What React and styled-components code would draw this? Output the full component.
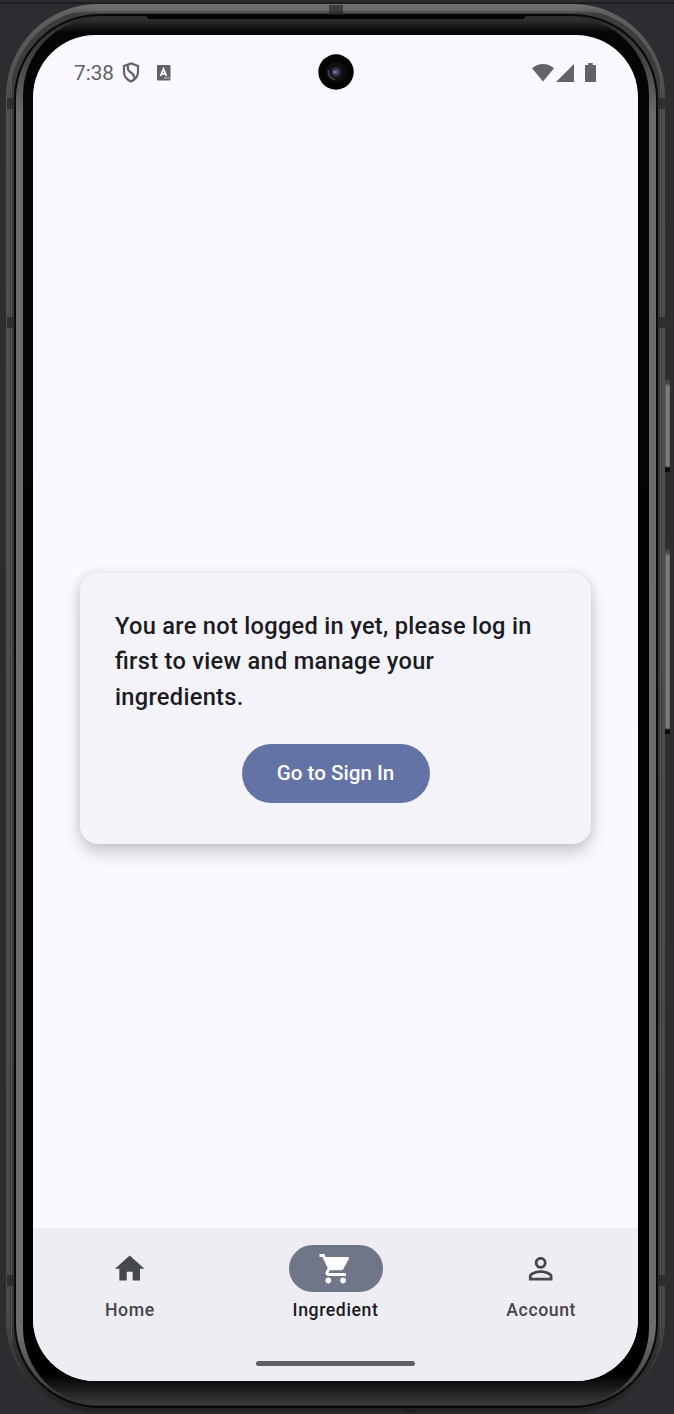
import React from 'react';
import styled, { createGlobalStyle } from 'styled-components';

const GlobalStyle = createGlobalStyle`
  * { box-sizing: border-box; }
  body { margin: 0; background: #2c2d31; font-family: Roboto, "Noto Sans", sans-serif; }
`;

const Stage = styled.main`
  position: relative;
  width: 674px;
  height: 1414px;
  padding: 4px 0 0 6px;
  overflow: hidden;
  background: #2c2d31;
`;

const TopLine = styled.div`
  position: absolute;
  inset: 0 0 auto;
  height: 4px;
  background: linear-gradient(#2c2d31 50%, #1e1f22 50%);
`;

const SideButton = styled.div`
  position: absolute;
  left: 665px;
  top: ${(p) => p.$top}px;
  width: 5px;
  height: ${(p) => p.$height}px;
  border-radius: 0 2px 2px 0;
  background: linear-gradient(#444 0 3px, transparent 7px calc(100% - 6px), #0a0a0a calc(100% - 4px)),
    linear-gradient(90deg, #5c5c5c 0 1px, #7c7c7a 1px 4px, #5a5a5a 5px);
`;

const Frame = styled.div`
  position: relative;
  width: 659px;
  height: 1409px;
  padding: 5px 3px 2px 4px;
  border-radius: 92px;
  background: linear-gradient(#727272 0, #606060 8px, #505050 90px, #4a4a4a 1310px, #242424 1409px);
`;

const Groove = styled.div`
  height: 100%;
  padding: 5px 4px 3px;
  border-radius: 88px;
  background: linear-gradient(90deg, transparent 1px, rgba(150, 150, 150, 0.3) 1px 2px, transparent 2px calc(100% - 2px), rgba(150, 150, 150, 0.3) calc(100% - 2px) calc(100% - 1px), transparent calc(100% - 1px)),
    linear-gradient(#747474 0, #3c3c3c 5px, #3a3a3a 1300px, #222 100%);
`;

const Seal = styled.div`
  height: 100%;
  padding: 2px;
  border-radius: 85px;
  background: #070707;
`;

const Rim = styled.div`
  height: 100%;
  padding: 2px 7px 1px;
  border-radius: 83px;
  background: linear-gradient(#2a2a2a 0, #3a3a3a 30px, #6c6c6c 100px, #6c6c6c 1320px, #2c2c2c 100%);
`;

const Bezel = styled.div`
  height: 100%;
  border-radius: 77px;
  padding: 17px 11px 24px 10px;
  background: linear-gradient(#343434, #050505 15px, #000 1354px, #080808 1360px, #3c3c3c);
`;

const SpeakerSlit = styled.div`
  position: absolute;
  left: 147px;
  top: 16px;
  width: 378px;
  height: 3px;
  border-radius: 0 0 4px 4px;
  background: #030303;
`;

const Seam = styled.i`
  position: absolute;
  left: ${(p) => p.$x}px;
  top: ${(p) => p.$y}px;
  width: ${(p) => p.$w || 8}px;
  height: ${(p) => p.$h || 11}px;
  background: rgba(30, 30, 30, 0.6);
`;

const Screen = styled.section`
  height: 100%;
  border-radius: 62px;
  overflow: hidden;
  display: flex;
  flex-direction: column;
  background: #fbf8ff;
`;

const StatusBar = styled.header`
  position: relative;
  height: 75px;
  flex: none;
  display: flex;
  align-items: center;
  padding: 0 42px 0 41px;
  color: #646266;
`;

const Clock = styled.span`
  width: 48px;
  font-size: 20.7px;
  line-height: 24px;
`;

const StatusIcon = styled.svg`
  display: block;
  flex: none;
  margin-left: ${(p) => p.$gap || 0}px;
`;

const Spacer = styled.span`
  flex: 1;
`;

const Camera = styled.div`
  position: absolute;
  left: 285px;
  top: 19px;
  width: 36px;
  height: 36px;
`;

const Content = styled.div`
  flex: 1;
  display: flex;
  flex-direction: column;
  align-items: center;
  padding-top: 463px;
`;

const Card = styled.article`
  width: 511px;
  height: 271px;
  padding: 36px 35px 35px;
  border-radius: 18px;
  background: #f4f3fa;
  box-shadow: 0 9px 18px rgba(0, 0, 0, 0.18), 0 0 10px rgba(0, 0, 0, 0.1);
  display: flex;
  flex-direction: column;
  align-items: center;
`;

const Message = styled.p`
  width: 100%;
  margin: 0;
  color: #1b1b21;
  font-size: 23.6px;
  line-height: 35.4px;
  font-weight: 500;
  letter-spacing: 0.3px;
  font-feature-settings: 'liga' 1;
`;

const Button = styled.button`
  width: 188px;
  height: 59px;
  flex: none;
  margin-top: 29px;
  padding: 0 0 2px;
  border: 0;
  border-radius: 30px;
  background: #6373a6;
  color: #fff;
  font: 500 20.6px/30px Roboto, sans-serif;
  letter-spacing: 0;
`;

const BottomNav = styled.nav`
  position: relative;
  flex: none;
  height: 153px;
  display: flex;
  justify-content: center;
  gap: 12px;
  padding-top: 17px;
  background: #eeedf3;
`;

const NavItem = styled.a`
  width: 194px;
  display: flex;
  flex-direction: column;
  align-items: center;
  color: ${(p) => (p.$active ? '#1b1b21' : '#45464b')};
  font-size: 17.7px;
  line-height: 24px;
  font-weight: 500;
  letter-spacing: 0.57px;
`;

const Indicator = styled.span`
  width: 94px;
  height: 47px;
  margin-bottom: 6px;
  border-radius: 24px;
  display: grid;
  place-items: center;
  background: ${(p) => (p.$active ? '#717588' : 'transparent')};
  color: ${(p) => (p.$active ? '#fff' : '#45484c')};
`;

const NavIcon = styled.svg`
  width: 35.4px;
  height: 35.4px;
  fill: currentColor;
`;

const Handle = styled.span`
  position: absolute;
  left: 223px;
  top: 133px;
  width: 159px;
  height: 5px;
  border-radius: 3px;
  background: #5f5f62;
`;

const NAV = [
  { label: 'Home', path: 'M10 20v-6h4v6h5v-8h3L12 3 2 12h3v8z' },
  {
    label: 'Ingredient',
    active: true,
    path: 'M7 18c-1.1 0-1.99.9-1.99 2S5.9 22 7 22s2-.9 2-2-.9-2-2-2zM1 2v2h2l3.6 7.59-1.35 2.45c-.16.28-.25.61-.25.96 0 1.1.9 2 2 2h12v-2H7.42c-.14 0-.25-.11-.25-.25l.03-.12.9-1.63h7.45c.75 0 1.41-.41 1.75-1.03l3.58-6.49A1.003 1.003 0 0 0 20 4H5.21l-.94-2H1zm16 16c-1.1 0-1.99.9-1.99 2s.89 2 1.99 2 2-.9 2-2-.9-2-2-2z',
  },
  {
    label: 'Account',
    path: 'M12 5.9a2.1 2.1 0 1 1 0 4.2 2.1 2.1 0 0 1 0-4.2m0 9c2.97 0 6.1 1.46 6.1 2.1v1.1H5.9V17c0-.64 3.13-2.1 6.1-2.1M12 4C9.79 4 8 5.79 8 8s1.79 4 4 4 4-1.79 4-4-1.79-4-4-4zm0 9c-2.67 0-8 1.34-8 4v3h16v-3c0-2.66-5.33-4-8-4z',
  },
];

function CameraLens() {
  return (
    <Camera>
      <svg width="36" height="36" viewBox="0 0 36 36">
        <defs>
          <radialGradient id="lens">
            <stop offset="0" stopColor="#75618c" />
            <stop offset=".5" stopColor="#34364f" />
            <stop offset="1" stopColor="#08090d" />
          </radialGradient>
        </defs>
        <circle cx="18" cy="18" r="17.7" fill="#040404" />
        <circle cx="18" cy="18" r="10" fill="#111" />
        <path d="M10.5 16a8 8 0 0 0 6.5 9.5" fill="none" stroke="#4a4a4a" strokeWidth="1.5" />
        <circle cx="18" cy="18" r="6.5" fill="url(#lens)" />
        <circle cx="16.5" cy="18" r="1.5" fill="#7793a5" opacity=".7" />
      </svg>
    </Camera>
  );
}

export default function App() {
  return (
    <>
      <GlobalStyle />
      <Stage>
        <TopLine />
        <SideButton $top={380} $height={92} />
        <SideButton $top={549} $height={185} />
        <Frame>
          <Groove>
            <Seal>
              <Rim>
                <Bezel>
                  <Screen>
                    <StatusBar>
                      <Clock>7:38</Clock>
                      <StatusIcon width="18" height="21" viewBox="0 0 17 21" fill="none" stroke="currentColor" strokeWidth="2.2">
                        <path d="M8.5 1.4 15.5 4v6c0 4.4-2.8 7.6-7 9.4C4.3 17.6 1.5 14.4 1.5 10V4z" />
                        <path d="M5.3 2.7v3.5c0 2.1 1 3 3.1 4.3 2.6 1.7 3.7 3 3.7 6.5" />
                      </StatusIcon>
                      <StatusIcon $gap={17} width="14" height="16" viewBox="0 0 14 16">
                        <rect width="13.5" height="15.5" rx="1" fill="currentColor" />
                        <path d="m3.5 11 3-7 3 7M4.7 8.8h3.7" fill="none" stroke="#fbf8ff" strokeWidth="1.8" />
                        <path d="M7 13h1.3m.8 0h1.3m.8 0h1.3" stroke="#fbf8ff" strokeWidth="1.2" />
                      </StatusIcon>
                      <Spacer />
                      <StatusIcon width="22" height="19" viewBox="0 0 22 19" fill="currentColor">
                        <path d="M0 5.2C6.2-.5 15.8-.5 22 5.2L11 18.5z" />
                      </StatusIcon>
                      <StatusIcon $gap={2} width="18" height="18" viewBox="0 0 18 18" fill="currentColor">
                        <path d="M18 0v18H0z" />
                      </StatusIcon>
                      <StatusIcon $gap={11} width="11" height="19" viewBox="0 0 11 19" fill="currentColor">
                        <path d="M3.3 0h4.4v2H10q1 0 1 1v15q0 1-1 1H1q-1 0-1-1V3q0-1 1-1h2.3z" />
                      </StatusIcon>
                      <CameraLens />
                    </StatusBar>
                    <Content>
                      <Card>
                        <Message>You are not logged in yet, please log in first to view and manage your ingredients.</Message>
                        <Button>Go to Sign In</Button>
                      </Card>
                    </Content>
                    <BottomNav>
                      {NAV.map(({ label, active, path }) => (
                        <NavItem key={label} $active={active}>
                          <Indicator $active={active}>
                            <NavIcon viewBox="0 0 24 24"><path d={path} /></NavIcon>
                          </Indicator>
                          {label}
                        </NavItem>
                      ))}
                      <Handle />
                    </BottomNav>
                  </Screen>
                </Bezel>
              </Rim>
            </Seal>
          </Groove>
        </Frame>
        <SpeakerSlit />
        <Seam $x={7} $y={98} />
        <Seam $x={7} $y={317} />
        <Seam $x={7} $y={1275} />
        <Seam $x={657} $y={98} />
        <Seam $x={657} $y={317} />
        <Seam $x={657} $y={1275} />
        <Seam $x={329} $y={5} $w={14} $h={10} />
        <Seam $x={403} $y={1408} $w={14} $h={5} />
      </Stage>
    </>
  );
}
